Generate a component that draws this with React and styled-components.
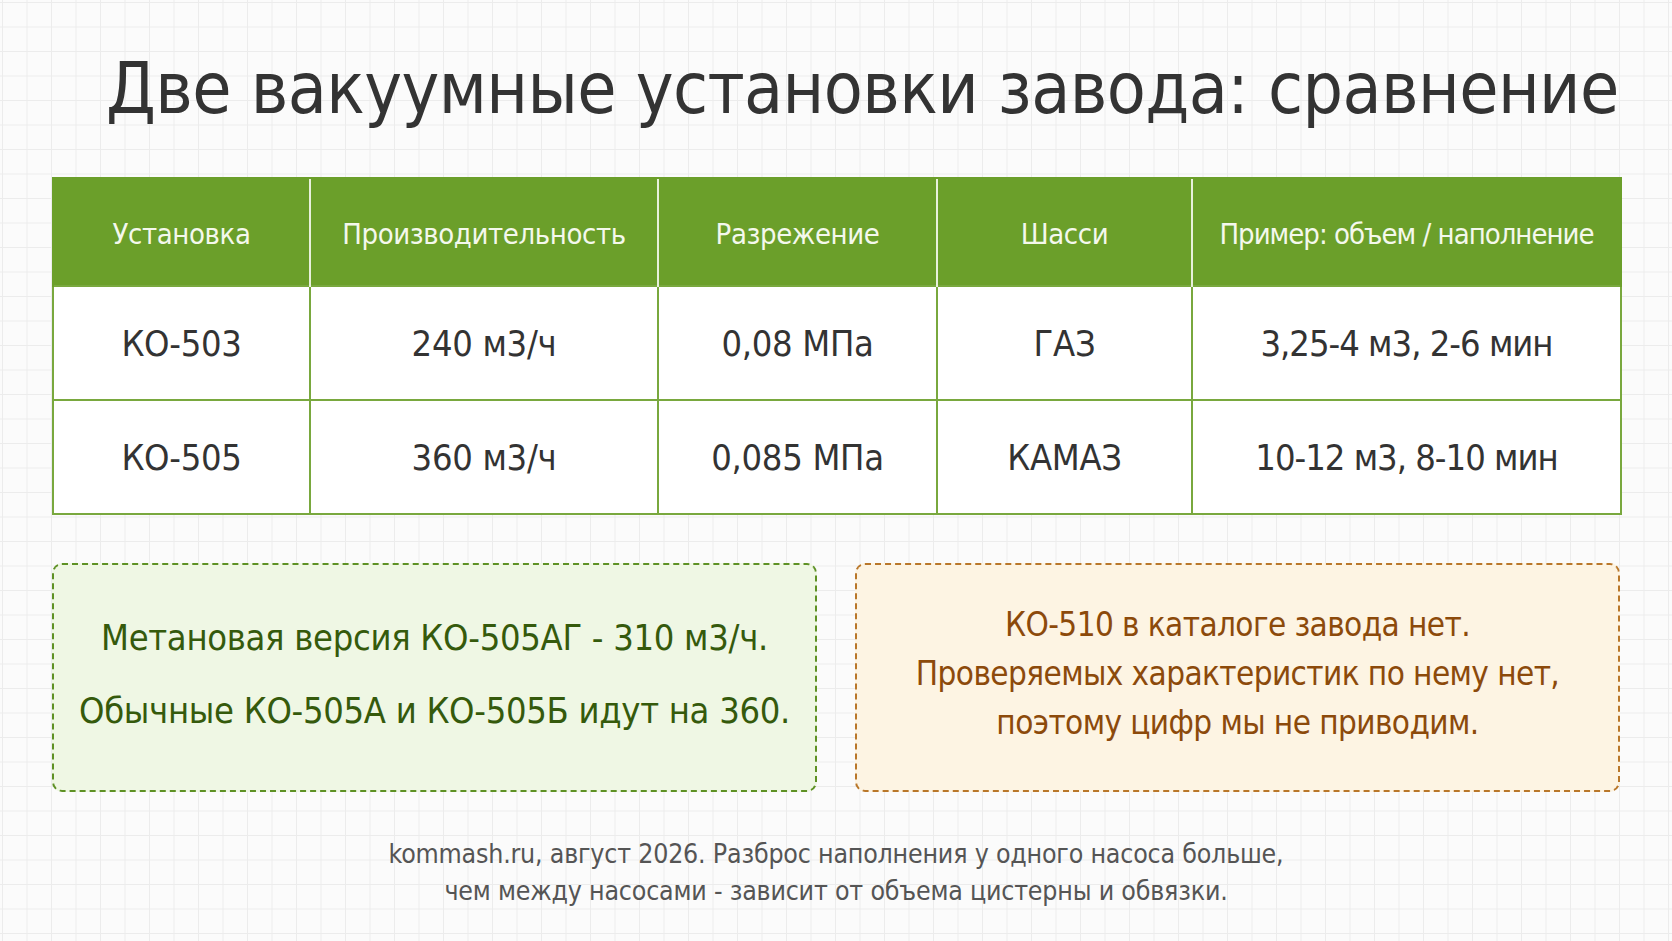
import React from "react";
import styled, { createGlobalStyle } from "styled-components";

const GlobalStyle = createGlobalStyle`
  html, body {
    margin: 0;
    padding: 0;
  }
  body {
    font-family: "DejaVu Sans Condensed", "DejaVu Sans", sans-serif;
    font-stretch: condensed;
    background-color: #fbfbfb;
    background-image:
      linear-gradient(to right, #ececec 1px, transparent 1px),
      linear-gradient(to bottom, #ececec 1px, transparent 1px);
    background-size: 24.5px 24.5px;
    background-position: 2px 2px;
  }
`;

const columns = ["Установка", "Производительность", "Разрежение", "Шасси", "Пример: объем / наполнение"];
const widths = [257, 348, 279, 255, 429];

const rows = [
  ["КО-503", "240 м3/ч", "0,08 МПа", "ГАЗ", "3,25-4 м3, 2-6 мин"],
  ["КО-505", "360 м3/ч", "0,085 МПа", "КАМАЗ", "10-12 м3, 8-10 мин"],
];

const App = () => {
  return (
    <Page>
      <GlobalStyle />
      <Title>Две вакуумные установки завода: сравнение</Title>
      <Table>
        <colgroup>
          {widths.map((w, i) => (
            <col key={i} style={{ width: w }} />
          ))}
        </colgroup>
        <thead>
          <tr>
            {columns.map((c, i) => (
              <HeadCell key={c} tight={i === columns.length - 1}>
                {c}
              </HeadCell>
            ))}
          </tr>
        </thead>
        <tbody>
          {rows.map((r) => (
            <tr key={r[0]}>
              {r.map((v, i) => (
                <Cell key={i} tight={i === r.length - 1}>
                  {v}
                </Cell>
              ))}
            </tr>
          ))}
        </tbody>
      </Table>
      <Notes>
        <Note tone="green">
          <NoteLine>Метановая версия КО-505АГ - 310 м3/ч.</NoteLine>
          <NoteLine>Обычные КО-505А и КО-505Б идут на 360.</NoteLine>
        </Note>
        <Note tone="orange">
          <NoteText>
            КО-510 в каталоге завода нет.
            <br />
            Проверяемых характеристик по нему нет,
            <br />
            поэтому цифр мы не приводим.
          </NoteText>
        </Note>
      </Notes>
      <Footer>
        kommash.ru, август 2026. Разброс наполнения у одного насоса больше,
        <br />
        чем между насосами - зависит от объема цистерны и обвязки.
      </Footer>
    </Page>
  );
};

const Page = styled.div`
  width: 1672px;
  height: 941px;
  box-sizing: border-box;
  padding: 0 52px;
  display: flex;
  flex-direction: column;
`;

const Title = styled.h1`
  margin: 45px 0 0 54px;
  font-size: 71px;
  font-weight: normal;
  letter-spacing: -0.6px;
  line-height: 88px;
  color: #333333;
  white-space: nowrap;
`;

const Table = styled.table`
  margin-top: 44px;
  width: 1568px;
  border-collapse: collapse;
  table-layout: fixed;
  background: #ffffff;
`;

const HeadCell = styled.th`
  height: 102px;
  padding: 4px 0 0;
  background: #6b9f2a;
  color: #f4f8ec;
  font-size: 29px;
  font-weight: normal;
  letter-spacing: ${(p) => (p.tight ? "-1px" : "-0.4px")};
  white-space: nowrap;
  text-align: center;
  border-left: 2px solid #e8f0dc;
  border-top: 2px solid #6b9f2a;
  &:first-child {
    border-left: 2px solid #6b9f2a;
  }
  &:last-child {
    border-right: 2px solid #6b9f2a;
  }
`;

const Cell = styled.td`
  height: 112px;
  padding: 0;
  text-align: center;
  font-size: 36px;
  letter-spacing: ${(p) => (p.tight ? "-1px" : "-0.3px")};
  color: #333333;
  border: 2px solid #79a83e;
`;

const Notes = styled.div`
  margin-top: 48px;
  display: grid;
  grid-template-columns: 765px 765px;
  column-gap: 38px;
`;

const Note = styled.div`
  height: 229px;
  box-sizing: border-box;
  border-radius: 10px;
  border: 2.5px dashed ${(p) => (p.tone === "green" ? "#5e9124" : "#b9772a")};
  background: ${(p) => (p.tone === "green" ? "#eff7e4" : "#fdf4e3")};
  color: ${(p) => (p.tone === "green" ? "#355a0c" : "#8c4a0b")};
  display: flex;
  flex-direction: column;
  align-items: center;
  justify-content: center;
  text-align: center;
`;

const NoteLine = styled.div`
  font-size: 36px;
  letter-spacing: -0.3px;
  line-height: 73px;
  &:last-child {
    margin-bottom: 8px;
  }
`;

const NoteText = styled.div`
  font-size: 33px;
  letter-spacing: -0.6px;
  line-height: 49px;
  margin-bottom: 8px;
`;

const Footer = styled.div`
  margin-top: 43px;
  text-align: center;
  font-size: 26.5px;
  letter-spacing: -0.2px;
  line-height: 37px;
  color: #555555;
`;

export default App;
